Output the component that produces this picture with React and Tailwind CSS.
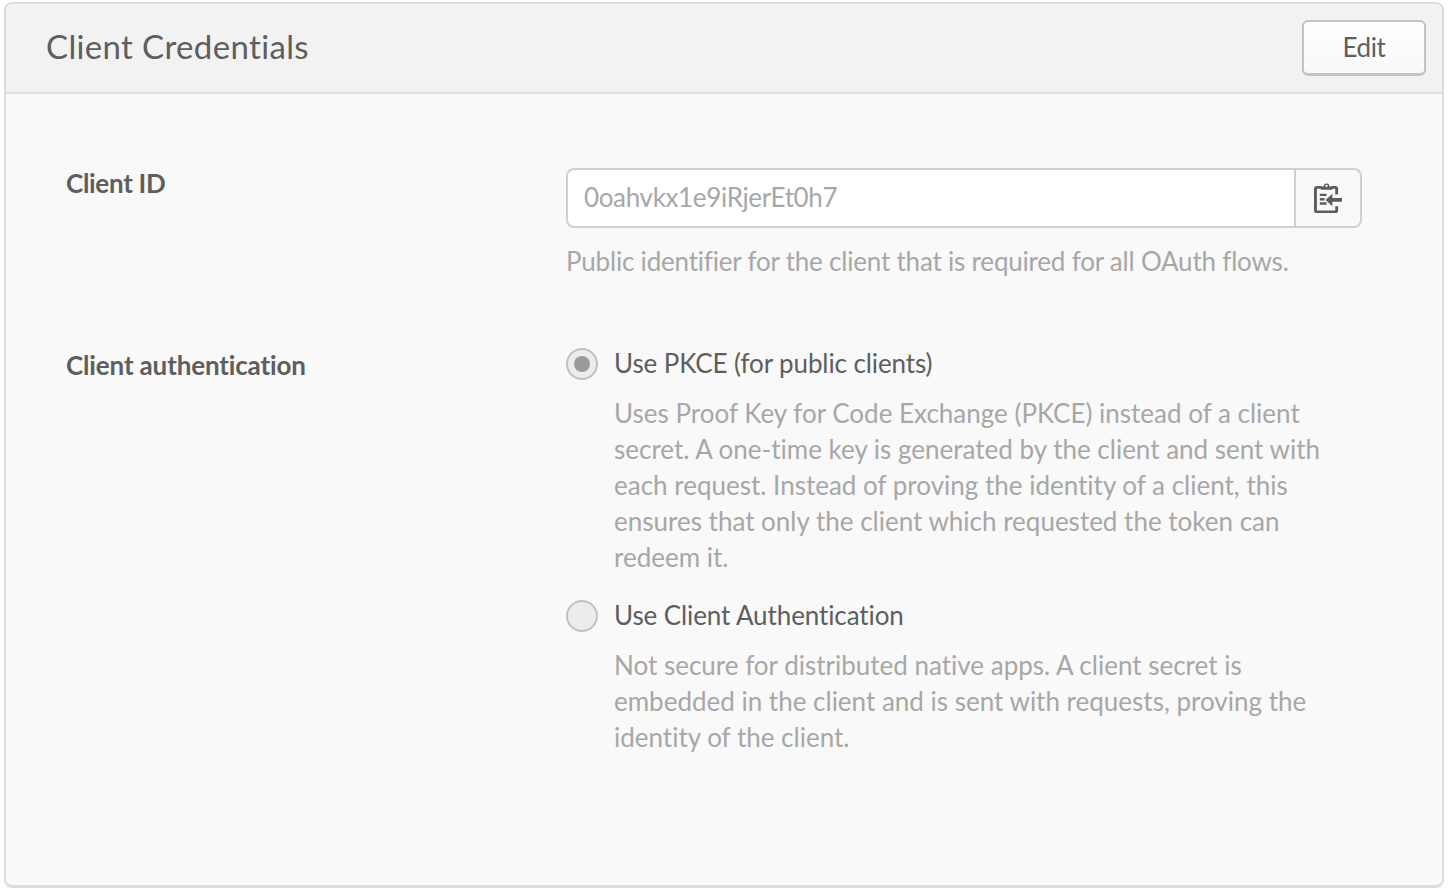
const ClipboardIcon = () => (
    <svg width="28" height="31" viewBox="0 0 29 32" fill="none" className="-mt-[2px]">
        <path d="M8 5.500H3A1.500 1.500 0 0 0 1.500 7v22.500A1.500 1.500 0 0 0 3 31h19a1.500 1.500 0 0 0 1.500-1.500V25M23.500 13V7A1.500 1.500 0 0 0 22 5.500h-4" stroke="#5c5c5c" strokeWidth="3" />
        <path d="M7 8V4.500h3a3 3 0 0 1 6 0h3V8z" fill="#5c5c5c" />
        <circle cx="13" cy="4" r="1.200" fill="#f9f9f9" />
        <path d="M6 12h7v2.500H6zM6 16.500h5V19H6zM6 21h7v2.500H6z" fill="#5c5c5c" />
        <path d="M12 18.500l7-6.500v4.500h10v4H19V25z" fill="#5c5c5c" />
    </svg>
);

const Radio = ({ checked }) => (
    <span className="w-8 h-8 shrink-0 rounded-full border-2 border-[#c1c1c1] bg-[#ececec] flex items-center justify-center">
        {checked && <span className="w-4 h-4 rounded-full bg-[#9a9a9a]" />}
    </span>
);

const RadioOption = ({ checked, label, children }) => (
    <div className="flex flex-col">
        <div className="flex items-center gap-4 h-8">
            <Radio checked={checked} />
            <span className="text-[26px] leading-[30px] -mt-[2px] tracking-[-0.1px] text-[#5e5e5e]">{label}</span>
        </div>
        <p className="ml-12 mt-[15px] text-[26px] leading-9 text-[#a7a7a7]">{children}</p>
    </div>
);

const App = () => (
    <div className="w-[1448px] h-[892px] bg-white pt-[2px] pl-1 font-['Lato',sans-serif] [font-variant-ligatures:none] overflow-hidden">
        <div className="w-[1440px] h-[886px] flex flex-col rounded-lg border-2 border-[#dcdcdc] border-b-[3px] bg-[#f9f9f9]">
            <div className="h-[90px] shrink-0 flex items-center justify-between pl-[40px] pr-4 bg-[#f2f2f2] border-b-2 border-[#dedede] rounded-t-lg">
                <h1 className="text-[33px] leading-[40px] -mt-[4px] tracking-[0.35px] text-[#5e5e5e]">Client Credentials</h1>
                <button className="w-[124px] h-[56px] -mt-[1px] rounded-md border-2 border-[#c4c4c4] border-b-[3px] bg-gradient-to-b from-white to-[#f8f8f8] text-[26px] tracking-[-0.4px] text-[#5e5e5e]">Edit</button>
            </div>
            <div className="flex flex-col pl-[60px] pt-[74px] gap-[69px]">
                <div className="flex">
                    <div className="w-[500px] text-[26px] leading-[30px] tracking-[-0.3px] font-bold text-[#5e5e5e]">Client ID</div>
                    <div className="w-[796px]">
                        <div className="flex h-[60px]">
                            <div className="flex-1 flex items-center pl-4 pb-[2px] rounded-l-lg border-2 border-[#d0d0d0] bg-white text-[26px] tracking-[-0.35px] text-[#a7a7a7]">0oahvkx1e9iRjerEt0h7</div>
                            <div className="w-[66px] flex items-center justify-center rounded-r-lg border-2 border-l-0 border-[#d0d0d0] bg-[#f9f9f9]">
                                <ClipboardIcon />
                            </div>
                        </div>
                        <p className="mt-[15px] text-[26px] leading-9 tracking-[-0.2px] text-[#a7a7a7]">Public identifier for the client that is required for all OAuth flows.</p>
                    </div>
                </div>
                <div className="flex">
                    <div className="w-[500px] pt-[2px] text-[26px] leading-[30px] tracking-[-0.15px] font-bold text-[#5e5e5e]">Client authentication</div>
                    <div className="w-[760px] flex flex-col gap-[25px]">
                        <RadioOption checked label="Use PKCE (for public clients)">
                            Uses Proof Key for Code Exchange (PKCE) instead of a client secret. A one-time key is generated by the client and sent with each request. Instead of proving the identity of a client, this ensures that only the client which requested the token can redeem it.
                        </RadioOption>
                        <RadioOption label="Use Client Authentication">
                            Not secure for distributed native apps. A client secret is embedded in the client and is sent with requests, proving the identity of the client.
                        </RadioOption>
                    </div>
                </div>
            </div>
        </div>
    </div>
);

export default App;
